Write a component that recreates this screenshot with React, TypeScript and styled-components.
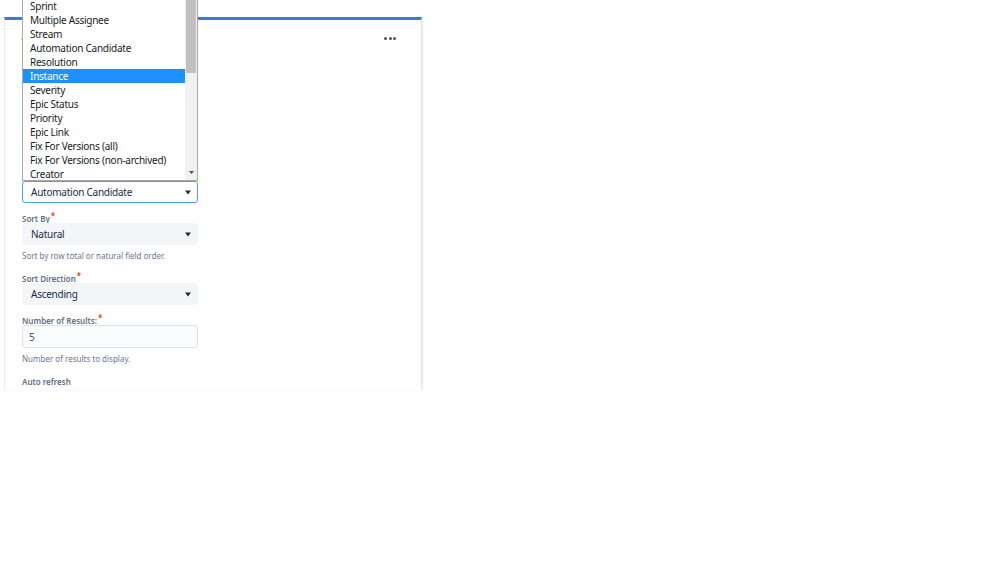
import React from "react";
import styled, { createGlobalStyle } from "styled-components";

const GlobalStyle = createGlobalStyle`
  html, body {
    margin: 0;
    padding: 0;
    background: #ffffff;
    font-family: "Noto Sans", "Open Sans", sans-serif;
    color: #172b4d;
  }
`;

const FIELDS = [
  "Sprint",
  "Multiple Assignee",
  "Stream",
  "Automation Candidate",
  "Resolution",
  "Instance",
  "Severity",
  "Epic Status",
  "Priority",
  "Epic Link",
  "Fix For Versions (all)",
  "Fix For Versions (non-archived)",
  "Creator",
];

const ACTIVE_FIELD = "Instance";

function Caret() {
  return (
    <svg width="6" height="5" viewBox="0 0 6 5">
      <path d="M0 0.5h6L3 4.5z" fill="#172b4d" />
    </svg>
  );
}

function Field({
  label,
  required,
  help,
  children,
}: {
  label: string;
  required?: boolean;
  help?: string;
  children?: React.ReactNode;
}) {
  return (
    <FieldGroup>
      <Label>
        {label}
        {required && <Star>*</Star>}
      </Label>
      {children}
      {help && <Help>{help}</Help>}
    </FieldGroup>
  );
}

export default function App() {
  return (
    <>
      <GlobalStyle />
      <Page>
        <Gadget>
          <GadgetHeader>
            <Title>‹</Title>
            <Menu>
              <Dot />
              <Dot />
              <Dot />
            </Menu>
          </GadgetHeader>
          <Form>
            <Select $focused>
              <span>Automation Candidate</span>
              <Caret />
            </Select>
            <Field label="Sort By" required help="Sort by row total or natural field order.">
              <Select>
                <span>Natural</span>
                <Caret />
              </Select>
            </Field>
            <Field label="Sort Direction" required>
              <Select>
                <span>Ascending</span>
                <Caret />
              </Select>
            </Field>
            <Field label="Number of Results:" required help="Number of results to display.">
              <TextInput>5</TextInput>
            </Field>
            <Field label="Auto refresh" />
          </Form>
        </Gadget>

        <ListBox>
          <Options>
            {FIELDS.map((f) => (
              <Option key={f} $active={f === ACTIVE_FIELD}>
                {f}
              </Option>
            ))}
          </Options>
          <ScrollBar>
            <Thumb />
            <ArrowDown>
              <svg width="5" height="3" viewBox="0 0 5 3">
                <path d="M0 0h5L2.5 3z" fill="#505050" />
              </svg>
            </ArrowDown>
          </ScrollBar>
        </ListBox>
      </Page>
    </>
  );
}

const Page = styled.div`
  position: relative;
  width: 999px;
  height: 562px;
  overflow: hidden;
`;

const Gadget = styled.div`
  margin: 17px 0 0 4px;
  width: 418px;
  height: 373px;
  box-sizing: border-box;
  border-top: 3px solid #3a7bd5;
  border-left: 1px solid #ebecf0;
  border-right: 1px solid #e3e4e8;
  box-shadow: 1px 0 2px rgba(9, 30, 66, 0.08);
  background: #fff;
  overflow: hidden;
`;

const GadgetHeader = styled.div`
  display: flex;
  align-items: center;
  justify-content: space-between;
  height: 36px;
  padding: 0 25px 0 16px;
`;

const Title = styled.span`
  font-size: 10px;
  color: #6b778c;
`;

const Menu = styled.div`
  display: flex;
  gap: 1.5px;
`;

const Dot = styled.span`
  width: 3px;
  height: 3px;
  border-radius: 50%;
  background: #42526e;
`;

const Form = styled.div`
  display: flex;
  flex-direction: column;
  padding: 125px 0 0 17px;
`;

const FieldGroup = styled.div`
  display: flex;
  flex-direction: column;
  margin-top: 10px;
`;

const Label = styled.div`
  height: 10px;
  font-size: 8px;
  font-weight: 600;
  color: #5e6c84;
  line-height: 12px;
  white-space: nowrap;
`;

const Star = styled.span`
  position: relative;
  top: -3px;
  line-height: 0;
  color: #de350b;
  font-size: 8px;
  margin-left: 1px;
`;

const Help = styled.div`
  font-size: 8px;
  color: #6b778c;
  margin: 6px 0 2px;
  line-height: 10px;
`;

const Select = styled.div<{ $focused?: boolean }>`
  display: flex;
  align-items: center;
  justify-content: space-between;
  width: 176px;
  height: 22px;
  box-sizing: border-box;
  padding: 0 6px 0 8px;
  border-radius: 3px;
  font-size: 10px;
  letter-spacing: -0.25px;
  background: ${(p) => (p.$focused ? "#ffffff" : "#f4f5f7")};
  border: 1px solid ${(p) => (p.$focused ? "#4c9aff" : "#f4f5f7")};
`;

const TextInput = styled.div`
  display: flex;
  align-items: center;
  width: 176px;
  height: 23px;
  box-sizing: border-box;
  padding: 0 6px;
  border-radius: 3px;
  font-size: 10px;
  color: #42526e;
  background: #fafbfc;
  border: 1px solid #dfe1e6;
`;

const ListBox = styled.div`
  position: absolute;
  left: 22px;
  top: 0;
  width: 176px;
  height: 181px;
  box-sizing: border-box;
  display: flex;
  background: #fff;
  border: 1px solid #a9a9a9;
  border-top: none;
  overflow: hidden;
`;

const Options = styled.div`
  flex: 1;
  margin-top: -1px;
`;

const Option = styled.div<{ $active?: boolean }>`
  height: 14px;
  line-height: 15px;
  padding-left: 7px;
  font-size: 10px;
  letter-spacing: -0.25px;
  white-space: nowrap;
  color: ${(p) => (p.$active ? "#ffffff" : "#1a1a1a")};
  background: ${(p) => (p.$active ? "#1e90ff" : "transparent")};
`;

const ScrollBar = styled.div`
  position: relative;
  width: 12px;
  background: #f1f1f1;
`;

const Thumb = styled.div`
  height: 73px;
  margin: 0 1px;
  background: #c1c1c1;
`;

const ArrowDown = styled.div`
  position: absolute;
  bottom: 6px;
  left: 0;
  right: 0;
  display: flex;
  justify-content: center;
`;
